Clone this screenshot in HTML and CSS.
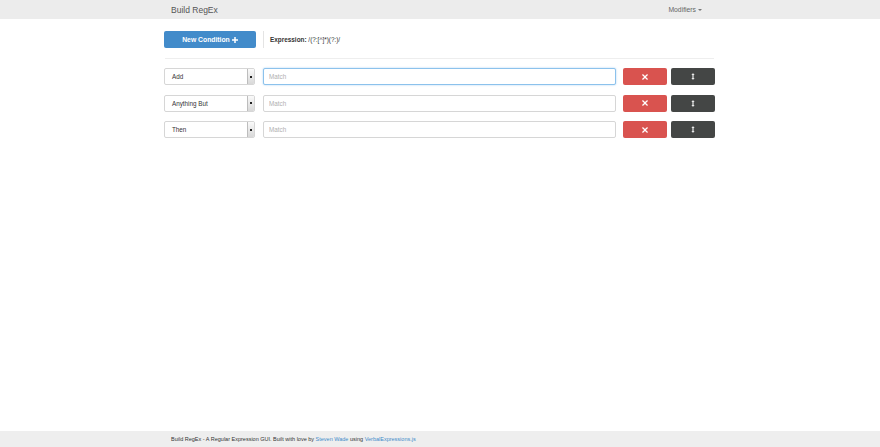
FILE: index.html
```html
<!DOCTYPE html>
<html>
<head>
<meta charset="utf-8">
<title>Build RegEx</title>
<link rel="stylesheet" href="styles.css">
</head>
<body>
<nav class="navbar">
  <div class="container nav-inner">
    <span class="brand">Build RegEx</span>
    <span class="modifiers">Modifiers <span class="caret"></span></span>
  </div>
</nav>
<main class="container main">
  <div class="toolbar">
    <button class="btn btn-primary new-cond">New Condition <svg class="plus" viewBox="0 0 8 8" width="6" height="6"><path d="M3 0h2v3h3v2H5v3H3V5H0V3h3z" fill="#fff"/></svg></button>
    <div class="divider"></div>
    <div class="expression"><b>Expression:</b> /(?:[^]*)(?:)/</div>
  </div>
  <hr class="sep">
  <div class="rows">
    <div class="row">
      <div class="select"><span class="select-text">Add</span><span class="select-arrow"><i></i></span></div>
      <input class="match focused" placeholder="Match">
      <button class="btn btn-danger"><svg viewBox="0 0 8 8" width="6" height="6"><path d="M1.2 0L4 2.8 6.8 0 8 1.2 5.2 4 8 6.8 6.8 8 4 5.2 1.2 8 0 6.8 2.8 4 0 1.2z" fill="#fff"/></svg></button>
      <button class="btn btn-dark"><svg viewBox="0 0 6 10" width="4" height="7"><path d="M3 0L5.5 2.5H3.8v5h1.7L3 10 0.5 7.5h1.7v-5H0.5z" fill="#fff"/></svg></button>
    </div>
    <div class="row">
      <div class="select"><span class="select-text">Anything But</span><span class="select-arrow"><i></i></span></div>
      <input class="match" placeholder="Match">
      <button class="btn btn-danger"><svg viewBox="0 0 8 8" width="6" height="6"><path d="M1.2 0L4 2.8 6.8 0 8 1.2 5.2 4 8 6.8 6.8 8 4 5.2 1.2 8 0 6.8 2.8 4 0 1.2z" fill="#fff"/></svg></button>
      <button class="btn btn-dark"><svg viewBox="0 0 6 10" width="4" height="7"><path d="M3 0L5.5 2.5H3.8v5h1.7L3 10 0.5 7.5h1.7v-5H0.5z" fill="#fff"/></svg></button>
    </div>
    <div class="row">
      <div class="select"><span class="select-text">Then</span><span class="select-arrow"><i></i></span></div>
      <input class="match" placeholder="Match">
      <button class="btn btn-danger"><svg viewBox="0 0 8 8" width="6" height="6"><path d="M1.2 0L4 2.8 6.8 0 8 1.2 5.2 4 8 6.8 6.8 8 4 5.2 1.2 8 0 6.8 2.8 4 0 1.2z" fill="#fff"/></svg></button>
      <button class="btn btn-dark"><svg viewBox="0 0 6 10" width="4" height="7"><path d="M3 0L5.5 2.5H3.8v5h1.7L3 10 0.5 7.5h1.7v-5H0.5z" fill="#fff"/></svg></button>
    </div>
  </div>
</main>
<footer class="footer">
  <div class="container footer-inner">Build RegEx - A Regular Expression GUI. Built with love by <a href="#">Steven Wade</a> using <a href="#">VerbalExpressions.js</a></div>
</footer>
</body>
</html>
```
FILE: styles.css
```css
* { box-sizing: border-box; }
html, body { margin: 0; padding: 0; height: 100%; }
body {
  font-family: "Liberation Sans", Arial, sans-serif;
  color: #333;
  background: #fff;
  width: 880px;
  height: 447px;
  position: relative;
  overflow: hidden;
}
.container { width: 552px; margin: 0 auto; }
.navbar { height: 19px; background: #ececec; }
.nav-inner { display: flex; align-items: center; justify-content: space-between; height: 19px; padding: 0 14px 0 7px; }
.brand { font-size: 8.5px; color: #555; }
.modifiers { font-size: 6.8px; color: #666; display: flex; align-items: center; gap: 2px; }
.caret { display: inline-block; width: 0; height: 0; border-left: 2px solid transparent; border-right: 2px solid transparent; border-top: 2px solid #777; }
.main { padding-top: 12px; }
.toolbar { display: flex; align-items: center; height: 17px; }
.btn { border: 0; border-radius: 2px; padding: 0; margin: 0; display: flex; align-items: center; justify-content: center; cursor: pointer; font-family: inherit; }
.btn-primary { background: #428bca; color: #fff; }
.new-cond { width: 92px; height: 17px; font-size: 6.8px; font-weight: bold; gap: 2px; }
.plus { display: block; }
.divider { width: 1px; height: 17px; background: #e4e4e4; margin: 0 6px 0 7px; }
.expression { font-size: 6.4px; color: #333; }
.expression b { font-weight: bold; }
.sep { border: 0; border-top: 1px solid #eeeeee; margin: 10px 2px 9px 1px; height: 0; }
.rows { display: flex; flex-direction: column; gap: 9.5px; }
.row { display: flex; align-items: center; height: 17px; }
.select { width: 91px; height: 17px; border: 1px solid #d6d6d6; border-radius: 2px; display: flex; align-items: stretch; background: #fff; }
.select-text { flex: 1; font-size: 6.3px; color: #333; padding-left: 7px; display: flex; align-items: center; }
.select-arrow { width: 7px; background: linear-gradient(#fafafa, #d8d8d8); border-left: 1px solid #bdbdbd; border-radius: 0 1px 1px 0; display: flex; align-items: center; justify-content: center; }
.select-arrow i { display: block; width: 2px; height: 2px; background: #222; }
.match { width: 353px; height: 17px; margin-left: 8px; border: 1px solid #d6d6d6; border-radius: 2px; padding: 0 0 0 5px; font-size: 6.3px; font-family: inherit; outline: none; }
.match::placeholder { color: #b0b0b0; }
.match.focused { border-color: #8cc2ec; box-shadow: 0 0 2px rgba(102,175,233,0.6); }
.btn-danger { background: #d9534f; width: 44px; height: 17px; margin-left: 7px; }
.btn-dark { background: #444645; width: 44px; height: 17px; margin-left: 4px; }
.footer { position: absolute; left: 0; right: 0; bottom: 0; height: 16px; background: #eeeeee; }
.footer-inner { height: 16px; display: flex; align-items: center; padding-left: 7px; font-size: 5.5px; color: #333; white-space: pre; }
.footer-inner a { color: #428bca; text-decoration: none; }
```
